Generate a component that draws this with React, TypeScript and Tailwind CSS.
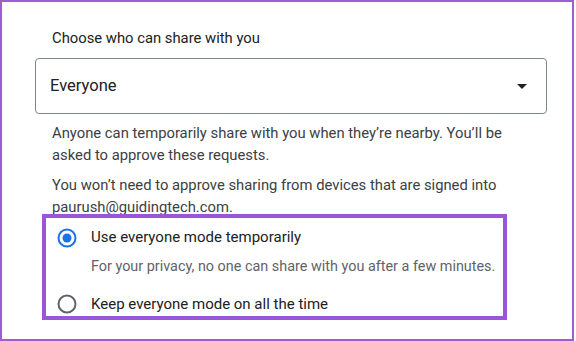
import React from "react";

function Radio({ checked }: { checked: boolean }) {
  return (
    <svg viewBox="0 0 20 20" className="h-[20px] w-[20px] shrink-0">
      <circle
        cx="10"
        cy="10"
        r="8.5"
        fill="none"
        stroke={checked ? "#1a73e8" : "#5f6368"}
        strokeWidth="2"
      />
      {checked && <circle cx="10" cy="10" r="4.5" fill="#1a73e8" />}
    </svg>
  );
}

export default function App() {
  return (
    <div
      className="box-border h-[341px] w-[574px] border-2 border-[#9b5fd3] bg-white pl-[33px] pt-[26px] text-[#202124]"
      style={{ fontFamily: "Roboto, 'Liberation Sans', sans-serif" }}
    >
      <div className="pl-[17px] text-[14.8px] leading-[20px]">Choose who can share with you</div>

      {/* dropdown */}
      <div className="mt-[10px] flex h-[56px] w-[512px] items-center justify-between rounded-[4px] border border-[#80868b] pl-[14px] pr-[19px]">
        <span className="text-[16.5px]">Everyone</span>
        <svg viewBox="0 0 10 5" className="h-[5px] w-[10px]">
          <path d="M0 0 L10 0 L5 5 Z" fill="#202124" />
        </svg>
      </div>

      <div className="w-[477px] pl-[17px] text-[14.8px] leading-[22px] text-[#3c4043]">
        <p className="mt-[8px]">
          Anyone can temporarily share with you when they’re nearby. You’ll be asked to approve these
          requests.
        </p>
        <p className="mt-[8px]">
          You won’t need to approve sharing from devices that are signed into paurush@guidingtech.com.
        </p>
      </div>

      {/* highlighted radio group */}
      <div className="relative mt-[-4px] ml-[7px] box-border flex w-[465px] flex-col border-4 border-[#9a55d8] pl-[11px]">
        <label className="flex h-[39px] items-center gap-[14px]">
          <Radio checked />
          <span className="text-[15px]">Use everyone mode temporarily</span>
        </label>
        <div className="h-[20px] pl-[34px] text-[14.4px] leading-[20px] text-[#5f6368]">
          For your privacy, no one can share with you after a few minutes.
        </div>
        <label className="mt-[15px] flex h-[24px] items-center gap-[14px]">
          <Radio checked={false} />
          <span className="text-[15px]">Keep everyone mode on all the time</span>
        </label>
      </div>
    </div>
  );
}
